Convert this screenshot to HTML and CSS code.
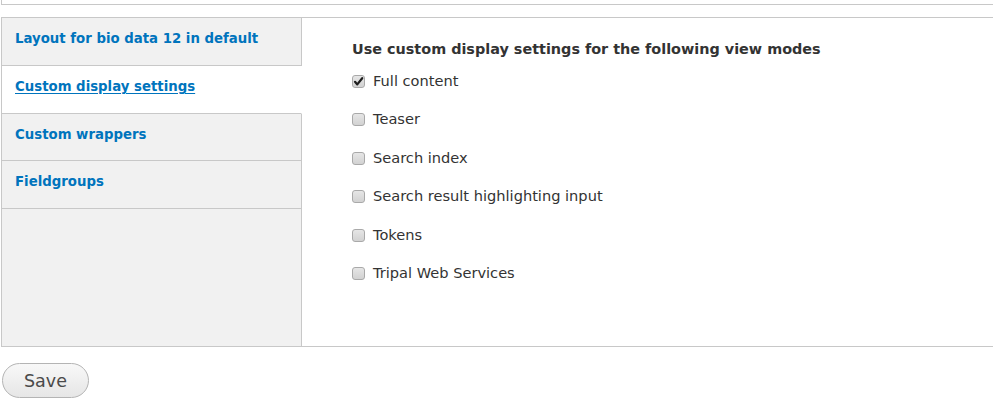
FILE: index.html
```html
<!DOCTYPE html>
<html lang="en">
<head>
<meta charset="utf-8">
<title>Manage display</title>
<link rel="stylesheet" href="styles.css">
</head>
<body>
<div class="top-box"></div>

<div class="vtabs">
  <ul class="vtabs-menu">
    <li class="vtab"><a href="#">Layout for bio data 12 in default</a></li>
    <li class="vtab is-selected"><a href="#">Custom display settings</a></li>
    <li class="vtab"><a href="#">Custom wrappers</a></li>
    <li class="vtab"><a href="#">Fieldgroups</a></li>
  </ul>
  <div class="vtabs-pane">
    <h3 class="pane-title">Use custom display settings for the following view modes</h3>
    <ul class="options">
      <li class="option">
        <span class="box checked"><svg viewBox="0 0 13 13" width="13" height="13"><path d="M3 6.8 L5.3 9.4 L10.2 3.2" fill="none" stroke="#1e1e1e" stroke-width="2.2" stroke-linecap="round" stroke-linejoin="round"/></svg></span>
        <span class="opt-label">Full content</span>
      </li>
      <li class="option"><span class="box"></span><span class="opt-label">Teaser</span></li>
      <li class="option"><span class="box"></span><span class="opt-label">Search index</span></li>
      <li class="option"><span class="box"></span><span class="opt-label">Search result highlighting input</span></li>
      <li class="option"><span class="box"></span><span class="opt-label">Tokens</span></li>
      <li class="option"><span class="box"></span><span class="opt-label">Tripal Web Services</span></li>
    </ul>
  </div>
</div>

<div class="actions">
  <button class="button" type="button">Save</button>
</div>
</body>
</html>
```

FILE: styles.css
```css
html, body {
  margin: 0;
  padding: 0;
  background: #fff;
  overflow: hidden;
}

body {
  font-family: "DejaVu Sans", Verdana, sans-serif;
  color: #333;
}

/* trailing edge of the fieldset above */
.top-box {
  height: 4px;
  margin-left: 1px;
  border-left: 1px solid #c8c8c8;
  border-bottom: 1px solid #c8c8c8;
}

/* vertical tabs */
.vtabs {
  display: flex;
  margin: 12px 0 0 1px;
  height: 328px;
  border-top: 1px solid #c8c8c8;
  border-bottom: 1px solid #c8c8c8;
  border-left: 1px solid #c8c8c8;
}

.vtabs-menu {
  list-style: none;
  margin: 0;
  padding: 0;
  width: 299px;
  flex: none;
  background: #f1f1f1;
  border-right: 1px solid #c8c8c8;
}

.vtab {
  height: 47px;
  border-bottom: 1px solid #c8c8c8;
  display: flex;
  align-items: center;
  padding-left: 13px;
  margin-right: -1px;
  border-right: 1px solid #c8c8c8;
}

.vtab:nth-child(3) {
  height: 46px;
}

.vtab a {
  color: #0074bd;
  font-weight: bold;
  font-size: 13.3px;
  text-decoration: none;
  margin-top: -6px;
}

.vtab.is-selected {
  background: #fff;
  border-right-color: #fff;
}

.vtab.is-selected a {
  text-decoration: underline;
  text-underline-offset: 2px;
}

.vtabs-pane {
  flex: 1;
  padding: 23px 0 0 50px;
}

.pane-title {
  margin: 0 0 16px;
  font-size: 14.4px;
  font-weight: bold;
  color: #333;
}

.options {
  list-style: none;
  margin: 0;
  padding: 0;
  display: flex;
  flex-direction: column;
}

.option {
  height: 38.4px;
  display: flex;
  align-items: flex-start;
}

.box {
  width: 11px;
  height: 11px;
  border: 1px solid #a9a9a9;
  border-radius: 3px;
  background: linear-gradient(#e6e6e6, #d2d2d2);
  margin: 2px 8px 0 0;
  position: relative;
  flex: none;
}

.box svg {
  position: absolute;
  left: -1px;
  top: -1px;
}

.opt-label {
  font-size: 14.6px;
  color: #333;
  line-height: 16px;
}

/* form actions */
.actions {
  padding: 16px 0 0 2px;
}

.button {
  font-family: inherit;
  font-size: 17.5px;
  color: #4a4a4a;
  height: 35px;
  width: 87px;
  padding: 0;
  border: 1px solid #b4b4b4;
  border-radius: 20px;
  background: linear-gradient(#f8f8f8, #e6e6e6);
  cursor: pointer;
}
```
